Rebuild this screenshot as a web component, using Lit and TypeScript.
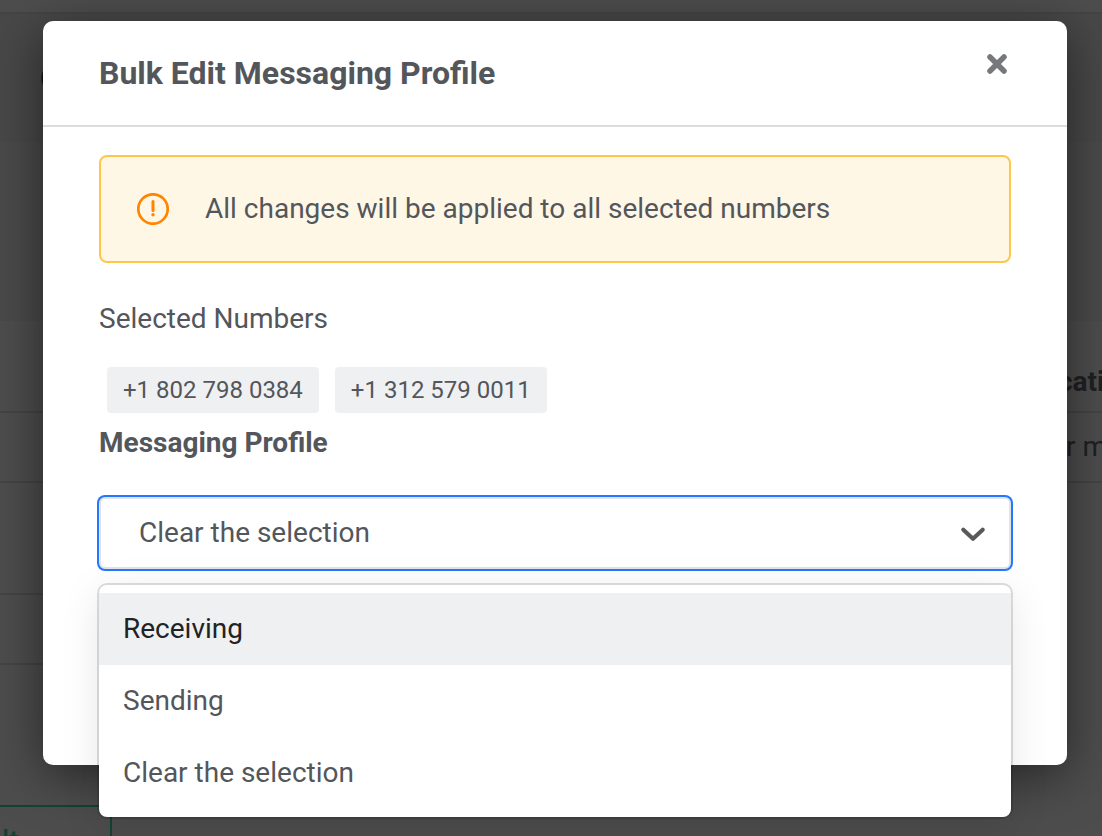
import { LitElement, html, css } from "lit";
import { customElement, state } from "lit/decorators.js";

@customElement("page-backdrop")
class PageBackdrop extends LitElement {
  static styles = css`
    :host { display: block; color: #1f2022; font-size: 28px; line-height: 32px; }
    .bar { height: 12px; border-bottom: 2px solid #444; }
    .head { height: 128px; background: #484848; display: flex; align-items: center; padding-left: 40px; font-size: 32px; font-weight: 700; color: #161616; }
    .filters { height: 179px; background: #4a4a4a; }
    .row { display: flex; align-items: center; height: 68px; border-bottom: 2px solid #444; white-space: nowrap; }
    .row.tall { height: 110px; }
    .row.short { margin-right: 50%; }
    .row.first { height: 58px; padding-top: 32px; font-weight: 700; }
    .cell { margin-left: auto; width: 36px; }
    .row.first .cell { width: 44px; }
    .more { margin-top: 140px; width: 112px; height: 80px; box-sizing: border-box; border: 2px solid #12452f; border-left: 0; color: #12452f; padding: 18px 2px 0; font-weight: 500; }
  `;
  render() {
    return html`
      <div class="bar"></div>
      <div class="head">C</div>
      <div class="filters"></div>
      <div class="row first"><span class="cell">cati</span></div>
      <div class="row"><span class="cell">r m</span></div>
      <div class="row tall short"></div>
      <div class="row short"></div>
      <div class="more">lt</div>
    `;
  }
}

@customElement("profile-select")
class ProfileSelect extends LitElement {
  @state() value = "Clear the selection";
  @state() active = "Receiving";
  @state() open = true;
  options = ["Receiving", "Sending", "Clear the selection"];

  static styles = css`
    :host { display: block; }
    label { display: block; font-size: 28px; line-height: 32px; font-weight: 700; }
    .field { position: relative; margin-top: 38px; }
    select { display: block; appearance: none; box-sizing: border-box; width: 100%; height: 72px; padding: 0 80px 2px 38px; border: 2px solid #e2e3e8; border-radius: 6px; box-shadow: 0 0 0 2px #2478ff; outline: none; background: #fff; color: inherit; font: inherit; font-size: 28px; }
    .chevron { position: absolute; right: 24px; top: 28px; width: 28px; height: 18px; pointer-events: none; }
    .menu { position: absolute; top: 100%; left: 0; right: 0; margin: 16px 0 0; padding: 8px 0; list-style: none; background: #fff; border-radius: 8px; box-shadow: 0 0 0 2px rgba(0, 0, 0, 0.13), 0 8px 40px rgba(0, 0, 0, 0.1); }
    .option { display: block; width: 100%; height: 72px; padding: 0 24px 2px; border: 0; background: none; text-align: left; font: inherit; font-size: 28px; color: inherit; }
    .option.active { background: #eff0f2; color: #222324; }
  `;
  choose(name: string) {
    this.value = name;
    this.open = false;
  }
  render() {
    return html`
      <label for="profile">Messaging Profile</label>
      <div class="field">
        <select id="profile" @mousedown=${(e: Event) => { e.preventDefault(); this.open = !this.open; }}>
          ${this.options.map((o) => html`<option ?selected=${o === this.value}>${o}</option>`)}
        </select>
        <svg class="chevron" viewBox="0 0 28 18" aria-hidden="true">
          <path d="M4.3 4.8L14 13.8L23.7 4.8" fill="none" stroke="#58595b" stroke-width="4.2" stroke-linecap="round" stroke-linejoin="round" />
        </svg>
        ${this.open
          ? html`<ul class="menu">
              ${this.options.map((o) => html`<li><button class="option ${o === this.active ? "active" : ""}"
                @mouseenter=${() => (this.active = o)} @click=${() => this.choose(o)}>${o}</button></li>`)}
            </ul>`
          : null}
      </div>
    `;
  }
}

@customElement("app-root")
class AppRoot extends LitElement {
  numbers = ["+1 802 798 0384", "+1 312 579 0011"];

  static styles = css`
    :host { display: block; position: relative; height: 100vh; overflow: hidden; background: #4d4d4d; color: #53565b; font-family: Roboto, "Liberation Sans", sans-serif; }
    .overlay { position: absolute; inset: 0; padding: 21px 35px 0 43px; }
    .dialog { background: #fff; border-radius: 10px; box-shadow: 0 10px 50px rgba(0, 0, 0, 0.5); padding-bottom: 196px; }
    .header { display: flex; justify-content: space-between; align-items: flex-start; padding: 32px 56px; border-bottom: 2px solid #dcdcde; }
    h1 { margin: 0; font-size: 32px; line-height: 40px; font-weight: 700; }
    .close { display: flex; padding: 0; border: 0; background: none; color: #77787c; }
    .close svg { width: 28px; height: 22px; }
    .body { padding: 28px 56px 0; }
    .alert { display: flex; align-items: center; gap: 36px; padding: 36px; border: 2px solid #ffc74a; border-radius: 8px; background: #fff7e6; font-size: 28px; line-height: 32px; }
    .alert svg { flex: none; width: 32px; height: 32px; }
    h2 { margin: 40px 0 0; font-size: 28px; line-height: 32px; font-weight: 400; }
    .chips { display: flex; flex-wrap: wrap; gap: 16px; margin: 32px 8px 14px; padding: 0; list-style: none; }
    .chip { padding: 8px 16px; border-radius: 4px; background: #eff0f2; font-size: 24px; line-height: 30px; }
  `;
  render() {
    return html`
      <page-backdrop aria-hidden="true"></page-backdrop>
      <div class="overlay">
        <section class="dialog" role="dialog" aria-labelledby="title">
          <header class="header">
            <h1 id="title">Bulk Edit Messaging Profile</h1>
            <button class="close" aria-label="Close">
              <svg viewBox="0 0 28 22"><path d="M7 4L21 18M21 4L7 18" stroke="currentColor" stroke-width="5.5" stroke-linecap="round" /></svg>
            </button>
          </header>
          <div class="body">
            <div class="alert" role="alert">
              <svg viewBox="0 0 32 32" fill="none" stroke="#ff8400" aria-hidden="true">
                <circle cx="16" cy="16" r="14.7" stroke-width="2.7" />
                <path d="M16 8.5V17.5" stroke-width="3" stroke-linecap="round" />
                <circle cx="16" cy="21.7" r="1.7" fill="#ff8400" stroke="none" />
              </svg>
              <span>All changes will be applied to all selected numbers</span>
            </div>
            <h2>Selected Numbers</h2>
            <ul class="chips">${this.numbers.map((n) => html`<li class="chip">${n}</li>`)}</ul>
            <profile-select></profile-select>
          </div>
        </section>
      </div>
    `;
  }
}
